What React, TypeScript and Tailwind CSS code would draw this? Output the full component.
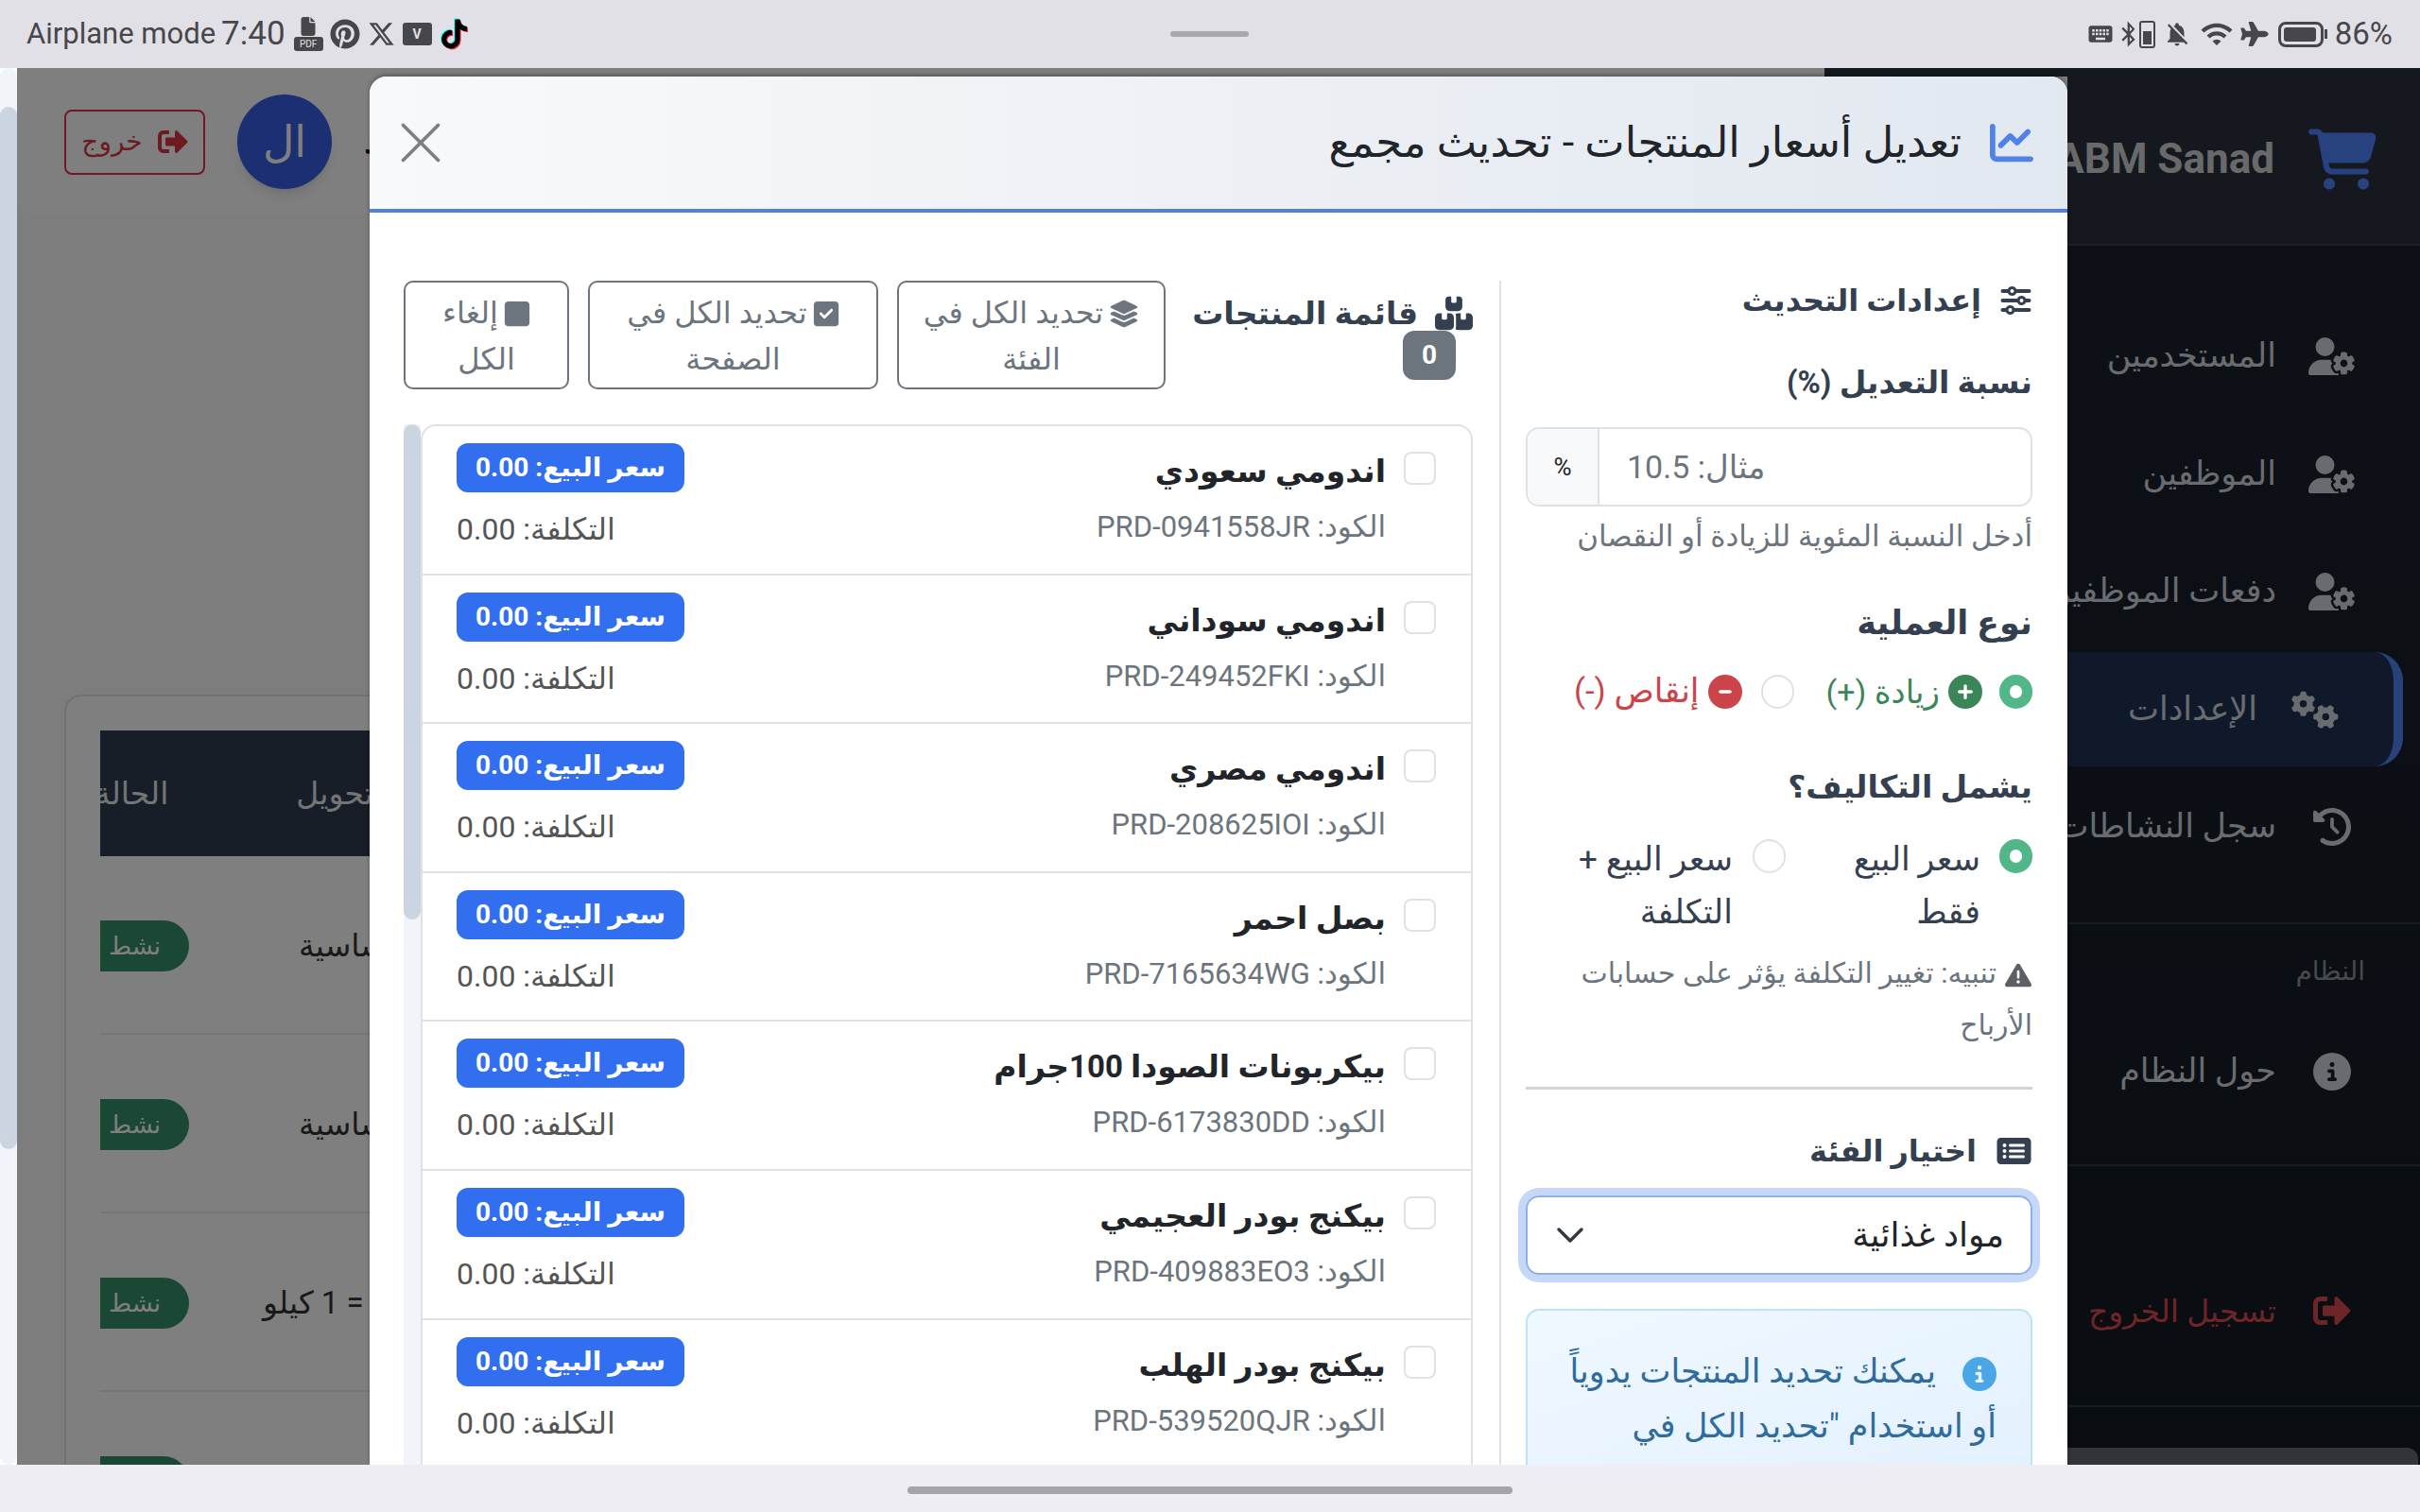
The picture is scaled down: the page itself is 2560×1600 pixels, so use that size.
import React from "react"
import {
  FaCartShopping, FaChartLine, FaSliders, FaBoxesStacked, FaLayerGroup, FaSquareCheck, FaSquare,
  FaTriangleExclamation, FaRectangleList, FaCirclePlus, FaCircleMinus, FaUserGear, FaGears,
  FaClockRotateLeft, FaCircleInfo, FaPinterest, FaXTwitter, FaTiktok, FaFile, FaPlane, FaBluetoothB,
} from "react-icons/fa6"
import { FaSignOutAlt } from "react-icons/fa"
import { MdKeyboard, MdNotificationsOff, MdWifi } from "react-icons/md"
import { X, ChevronDown } from "lucide-react"

const products = [
  { name: "اندومي سعودي", code: "PRD-0941558JR" },
  { name: "اندومي سوداني", code: "PRD-249452FKI" },
  { name: "اندومي مصري", code: "PRD-208625IOI" },
  { name: "بصل احمر", code: "PRD-7165634WG" },
  { name: "بيكربونات الصودا 100جرام", code: "PRD-6173830DD" },
  { name: "بيكنج بودر العجيمي", code: "PRD-409883EO3" },
  { name: "بيكنج بودر الهلب", code: "PRD-539520QJR" },
]

function StatusBar() {
  return (
    <div className="h-[72px] shrink-0 bg-[#e1e0e6] flex items-center justify-between pl-[28px] pr-[29px] text-[#47474b] relative">
      <div className="flex items-center text-[31px]">
        <span>Airplane mode</span>
        <span className="ml-[6px] mr-[9px] text-[35px]">7:40</span>
        <div className="w-[31px] h-[36px] flex flex-col items-center">
          <FaFile className="w-[20px] h-[20px]" />
          <div className="w-[31px] h-[15px] mt-[1px] bg-[#47474b] rounded-[3px] text-[#e1e0e6] text-[10px] leading-[15px] text-center">PDF</div>
        </div>
        <FaPinterest className="ml-[7px] w-[32px] h-[32px]" />
        <FaXTwitter className="ml-[8px] w-[29px] h-[30px]" />
        <div className="ml-[8px] w-[31px] h-[24px] bg-[#47474b] rounded-[3px] flex items-center justify-center text-[#e1e0e6] text-[14px] font-bold">V</div>
        <FaTiktok className="ml-[10px] w-[27px] h-[32px] text-black [filter:drop-shadow(1px_1px_0_#fe2c55)_drop-shadow(-1px_-1px_0_#25f4ee)]" />
      </div>
      <div className="absolute left-[1238px] top-[33px] w-[83px] h-[6px] rounded-full bg-[#a9a9ad]" />
      <div className="flex items-center text-[33px]">
        <MdKeyboard className="w-[30px] h-[30px]" />
        <FaBluetoothB className="ml-[6px] w-[17px] h-[28px]" />
        <div className="ml-[3px] w-[17px] h-[29px] border-2 border-[#47474b] rounded-[3px] flex items-end p-[2px]">
          <div className="w-full h-[14px] bg-[#47474b]" />
        </div>
        <MdNotificationsOff className="ml-[8px] w-[30px] h-[30px]" />
        <MdWifi className="ml-[8px] w-[38px] h-[36px]" />
        <FaPlane className="ml-[6px] w-[30px] h-[26px]" />
        <div className="ml-[10px] w-[48px] h-[27px] border-[3px] border-[#47474b] rounded-[8px] p-[3px]">
          <div className="w-[34px] h-full bg-[#47474b] rounded-[3px]" />
        </div>
        <div className="w-[3px] h-[10px] bg-[#47474b] ml-[1px]" />
        <span className="ml-[8px]">86%</span>
      </div>
    </div>
  )
}

function SideItem({ icon, label, active, red }: { icon: React.ReactNode; label: string; active?: boolean; red?: boolean }) {
  if (active) {
    return (
      <div className="h-[121px] my-[1.75px] mr-[18px] pr-[58px] flex items-center gap-[36px] whitespace-nowrap text-[35px] text-[#d3d8df] bg-[#1f3352] border-r-[10px] border-[#4f83f7] rounded-r-[30px]">
        <span className="w-[50px] flex justify-center shrink-0">{icon}</span>
        <span>{label}</span>
      </div>
    )
  }
  return (
    <div className={`h-[124.5px] flex items-center gap-[34px] pr-[68px] whitespace-nowrap ${red ? "text-[33px] text-[#dc4a4f]" : "text-[35px] text-[#d3d8df]"}`}>
      <span className="w-[50px] flex justify-center shrink-0">{icon}</span>
      <span>{label}</span>
    </div>
  )
}

function Sidebar() {
  return (
    <aside dir="rtl" className="w-[373px] shrink-0 bg-gradient-to-b from-[#1c2430] to-[#141a24] overflow-hidden relative">
      <div className="h-[188px] bg-[#2a323e] border-b-2 border-[#3a424e] flex items-center gap-[36px] pr-[46px] pt-[6px] whitespace-nowrap">
        <FaCartShopping className="w-[72px] h-[65px] text-[#4e85ff] shrink-0" />
        <span className="text-[44px] font-bold text-[#cfd2d6]">ABM Sanad</span>
      </div>
      <div className="pt-[55px]">
        <SideItem icon={<FaUserGear className="w-[50px] h-[40px]" />} label="المستخدمين" />
        <SideItem icon={<FaUserGear className="w-[50px] h-[40px]" />} label="الموظفين" />
        <SideItem icon={<FaUserGear className="w-[50px] h-[40px]" />} label="دفعات الموظفين" />
        <SideItem active icon={<FaGears className="w-[50px] h-[40px]" />} label="الإعدادات" />
        <SideItem icon={<FaClockRotateLeft className="w-[40px] h-[40px]" />} label="سجل النشاطات" />
      </div>
      <div className="mt-[38px] h-[96px] border-t-2 border-[#2e3a4a] pt-[30px] pr-[58px] text-[28px] leading-[40px] text-[#8d939c]">النظام</div>
      <SideItem icon={<FaCircleInfo className="w-[40px] h-[40px]" />} label="حول النظام" />
      <div className="mt-[36px] border-t-2 border-[#2e3a4a]" />
      <div className="mt-[91px]">
        <SideItem red icon={<FaSignOutAlt className="w-[40px] h-[40px]" />} label="تسجيل الخروج" />
      </div>
      <div className="mt-[37px] border-t-2 border-[#2e3a4a]" />
      <div className="absolute left-0 right-[2px] bottom-0 h-[18px] bg-[#66696f] rounded-tr-[12px]" />
    </aside>
  )
}

const tableRows = [
  { text: "أساسية", gap: "ml-[116px]" },
  { text: "أساسية", gap: "ml-[116px]" },
  { text: "= 1 كيلو", gap: "ml-[78px]" },
  { text: "أساسية", gap: "ml-[116px]" },
]

function BackgroundPage() {
  return (
    <div className="absolute inset-0 flex bg-[#fafafa]">
      <div className="flex-1 min-w-0 overflow-hidden relative">
        <div className="h-[156px] bg-white rounded-bl-[20px] flex items-center pl-[50px] gap-[34px]">
          <div className="w-[149px] h-[69px] border-2 border-[#dc3545] rounded-[8px] flex items-center justify-center gap-[16px] text-[#dc3545] text-[28px]">
            <span>خروج</span>
            <FaSignOutAlt className="w-[32px] h-[32px]" />
          </div>
          <div className="w-[100px] h-[100px] rounded-full bg-[#365ee4] flex items-center justify-center text-white text-[46px] shadow-lg">ال</div>
          <span className="text-[34px] text-black font-bold">محمد</span>
        </div>
        <div className="mt-[507px] ml-[50px] mr-[-100px] border-2 border-[#dee2e6] rounded-[18px] pl-[36px] pt-[36px] bg-white h-[900px]">
          <div dir="ltr" className="h-[133px] bg-[#2e3c50] flex items-center gap-[135px] text-[#e6e8ea] text-[33px] overflow-hidden">
            <span className="-ml-[6px]">الحالة</span>
            <span>تحويل</span>
          </div>
          {tableRows.map((r, i) => (
            <div key={i} className="h-[189px] pt-[3px] border-b-2 border-[#e9ecef] flex items-center overflow-hidden text-[33px] text-[#333]">
              <div className="w-[94px] h-[54px] bg-[#34906a] rounded-r-full flex items-center pl-[9px] text-white text-[26px] shrink-0">نشط</div>
              <span dir="rtl" className={`${r.gap} whitespace-nowrap`}>{r.text}</span>
            </div>
          ))}
        </div>
        <div className="absolute right-0 top-0 w-[257px] h-[9px] bg-[#2a323e]" />
      </div>
      <Sidebar />
    </div>
  )
}

function ProductRow({ name, code }: { name: string; code: string }) {
  return (
    <div className="h-[157.6px] shrink-0 border-b-2 border-[#dee2e6] flex justify-between pr-[37px] pl-[36px]">
      <div className="flex gap-[19px]">
        <div className="mt-[27px] w-[34px] h-[35px] border-2 border-[#dee2e6] rounded-[8px] shrink-0" />
        <div>
          <div className="mt-[25px] h-[46px] leading-[46px] text-[33px] font-bold text-[#212529] whitespace-nowrap">{name}</div>
          <div className="mt-[13px] h-[46px] leading-[46px] text-[31px] text-[#6c757d] whitespace-nowrap">الكود: {code}</div>
        </div>
      </div>
      <div className="flex flex-col items-end">
        <div className="mt-[18px] h-[52px] w-[241px] rounded-[12px] bg-[#316ff0] text-white font-bold text-[28px] flex items-center justify-center whitespace-nowrap">سعر البيع: 0.00</div>
        <div className="mt-[16px] text-[32px] leading-[46px] text-[#555] whitespace-nowrap">التكلفة: 0.00</div>
      </div>
    </div>
  )
}

function OutlineButton({ icon, l1, l2, w }: { icon: React.ReactNode; l1: string; l2: string; w: string }) {
  return (
    <div className={`${w} h-[115px] border-2 border-[#6c757d] rounded-[10px] text-[#6c757d] text-[32px] leading-[49px] text-center pt-[8px] shrink-0`}>
      <div className="flex items-center justify-center gap-[6px] whitespace-nowrap">{icon}<span>{l1}</span></div>
      <div className="whitespace-nowrap">{l2}</div>
    </div>
  )
}

function Radio({ on }: { on?: boolean }) {
  return on ? (
    <div className="w-[35px] h-[36px] rounded-full border-[11px] border-[#52b788] bg-white shrink-0" />
  ) : (
    <div className="w-[35px] h-[36px] rounded-full border-2 border-[#dee2e6] bg-white shrink-0" />
  )
}

function Modal() {
  return (
    <div dir="rtl" className="absolute left-[373px] top-[9px] bottom-0 w-[1796px] bg-white rounded-t-[18px] overflow-hidden flex flex-col shadow-[0_-2px_4px_rgba(0,0,0,0.3)]">
      <div className="h-[144px] shrink-0 border-b-4 border-[#5480dd] bg-gradient-to-l from-[#e2e8f0] to-[#f8f9fa] flex items-center justify-between pr-[36px] pl-[17px]">
        <div className="flex items-center gap-[30px]">
          <FaChartLine className="w-[46px] h-[46px] text-[#5182e6]" />
          <span className="text-[45px] text-[#212529] whitespace-nowrap">تعديل أسعار المنتجات - تحديث مجمع</span>
        </div>
        <X className="w-[74px] h-[74px] text-[#7c7f82]" strokeWidth={1.2} />
      </div>
      <div className="flex-1 min-h-0 flex pt-[72px]">
        <div className="w-[601px] shrink-0 border-l-2 border-[#dee2e6] pr-[37px] pl-[26px] text-[#343f50]">
          <div className="h-[42px] flex items-center gap-[19px] font-bold text-[32px]">
            <FaSliders className="w-[35px] h-[32px]" />
            <span>إعدادات التحديث</span>
          </div>
          <div className="mt-[42px] h-[48px] leading-[48px] font-bold text-[33px]">نسبة التعديل (%)</div>
          <div className="mt-[23px] h-[84px] border-2 border-[#dee2e6] rounded-[14px] flex overflow-hidden">
            <div className="flex-1 flex items-center justify-end pl-[29px] text-[34px] text-[#6c757d]">
              <span>مثال: 10.5</span>
            </div>
            <div className="w-[76px] bg-[#f8f9fa] border-r-2 border-[#dee2e6] flex items-center justify-center text-[26px] text-[#212529]">%</div>
          </div>
          <div className="mt-[10px] h-[44px] leading-[44px] text-[31px] text-[#6c757d] whitespace-nowrap">أدخل النسبة المئوية للزيادة أو النقصان</div>
          <div className="mt-[46px] h-[48px] leading-[48px] font-bold text-[35px]">نوع العملية</div>
          <div className="mt-[30px] h-[36px] flex items-center">
            <Radio on />
            <FaCirclePlus className="mr-[18px] w-[36px] h-[36px] text-[#3c8558]" />
            <span className="mr-[9px] text-[34px] text-[#3c8558] whitespace-nowrap">زيادة (+)</span>
            <div className="w-[34px] shrink-0" />
            <Radio />
            <FaCircleMinus className="mr-[20px] w-[36px] h-[36px] text-[#cb444a]" />
            <span className="mr-[9px] text-[35px] text-[#cb444a] whitespace-nowrap">إنقاص (-)</span>
          </div>
          <div className="mt-[59px] h-[48px] leading-[48px] font-bold text-[33px]">يشمل التكاليف؟</div>
          <div className="mt-[25px] flex text-[35px] leading-[56px]">
            <div className="w-[261px] flex gap-[20px]">
              <div className="mt-[6px]"><Radio on /></div>
              <span>سعر البيع<br />فقط</span>
            </div>
            <div className="flex gap-[21px]">
              <div className="mt-[6px]"><Radio /></div>
              <span className="whitespace-nowrap">سعر البيع +<br />التكلفة</span>
            </div>
          </div>
          <div className="mt-[8px] text-[30px] leading-[55px] text-[#6c757d] whitespace-nowrap">
            <FaTriangleExclamation className="inline-block align-middle w-[30px] h-[28px] ml-[8px] text-[#5c6066]" />
            تنبيه: تغيير التكلفة يؤثر على حسابات<br />الأرباح
          </div>
          <div className="mt-[38px] h-[3px] bg-[#ced4da]" />
          <div className="mt-[44px] h-[42px] flex items-center gap-[20px] font-bold text-[32px]">
            <FaRectangleList className="w-[39px] h-[32px]" />
            <span>اختيار الفئة</span>
          </div>
          <div className="mt-[26px] h-[84px] border-2 border-[#8cb0ea] rounded-[14px] ring-[8px] ring-[#c6d8f8] flex items-center justify-between pr-[28px] pl-[21px] text-[36px] text-[#212529]">
            <span>مواد غذائية</span>
            <ChevronDown className="w-[48px] h-[48px] text-[#343a40]" strokeWidth={1.75} />
          </div>
          <div className="mt-[36px] border-2 border-[#bfe3f5] rounded-[14px] bg-gradient-to-br from-[#eef8ff] to-[#e3f0fe] pt-[36px] pr-[36px] pl-[36px] pb-[36px] text-[35px] leading-[58px] text-[#2f6b9c] whitespace-nowrap">
            <FaCircleInfo className="inline-block align-middle w-[36px] h-[36px] ml-[28px] text-[#4ba6e6]" />
            يمكنك تحديد المنتجات يدوياً<br />أو استخدام "تحديد الكل في
          </div>
        </div>
        <div className="flex-1 min-w-0 pr-[28px] pl-[36px] flex flex-col">
          <div className="h-[115px] shrink-0 flex justify-between">
            <div className="relative w-[298px]">
              <div className="flex items-center gap-[18px] mt-[10px] font-bold text-[33px] text-[#343f50] whitespace-nowrap">
                <FaBoxesStacked className="w-[40px] h-[37px] shrink-0" />
                <span>قائمة المنتجات</span>
              </div>
              <div className="absolute right-[18px] top-[53px] w-[56px] h-[52px] rounded-[12px] bg-[#6c757d] text-white font-bold text-[28px] flex items-center justify-center">0</div>
            </div>
            <div className="flex gap-[20px]">
              <OutlineButton w="w-[284px]" icon={<FaLayerGroup className="w-[32px] h-[30px]" />} l1="تحديد الكل في" l2="الفئة" />
              <OutlineButton w="w-[307px]" icon={<FaSquareCheck className="w-[28px] h-[30px]" />} l1="تحديد الكل في" l2="الصفحة" />
              <OutlineButton w="w-[175px]" icon={<FaSquare className="w-[28px] h-[30px]" />} l1="إلغاء" l2="الكل" />
            </div>
          </div>
          <div className="mt-[37px] flex-1 min-h-0 flex overflow-hidden">
            <div className="flex-1 min-w-0 border-2 border-b-0 border-[#dee2e6] rounded-t-[16px] flex flex-col">
              {products.map((p) => <ProductRow key={p.code} {...p} />)}
            </div>
            <div className="w-[18px] shrink-0 bg-[#f1f5f9] relative">
              <div className="h-[524px] bg-[#cbd5e1] rounded-full" />
            </div>
          </div>
        </div>
      </div>
    </div>
  )
}

export default function App() {
  return (
    <div className="w-[2560px] h-[1600px] overflow-hidden flex flex-col font-['Roboto','DejaVu_Sans',sans-serif]">
      <StatusBar />
      <div className="flex-1 min-h-0 flex">
        <div className="w-[18px] shrink-0 bg-[#f1f5f9] rounded-full overflow-hidden pt-[41px]">
          <div className="h-[1103px] bg-[#cbd5e1] rounded-full" />
        </div>
        <div className="flex-1 min-w-0 relative overflow-hidden">
          <BackgroundPage />
          <div className="absolute inset-0 bg-black/50" />
          <Modal />
        </div>
      </div>
      <div className="h-[50px] shrink-0 bg-[#eeedf3] flex items-center justify-center pt-[4px]">
        <div className="w-[640px] h-[8px] rounded-full bg-[#a5a5a9]" />
      </div>
    </div>
  )
}
